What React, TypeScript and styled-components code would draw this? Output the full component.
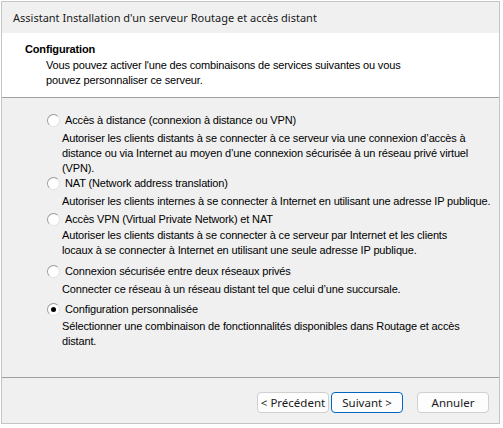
import React from 'react'
import styled, { createGlobalStyle } from 'styled-components'

const GlobalStyle = createGlobalStyle`
  html, body {
    margin: 0;
    padding: 0;
    background: #ffffff;
  }
  body {
    font-family: "Liberation Sans", Arial, sans-serif;
    font-size: 11px;
    letter-spacing: -0.15px;
    color: #000;
  }
`

type Option = {
  label: string
  desc: string[]
  checked?: boolean
  top: number
  gap: number
}

const options: Option[] = [
  {
    label: 'Accès à distance (connexion à distance ou VPN)',
    desc: [
      'Autoriser les clients distants à se connecter à ce serveur via une connexion d’accès à',
      'distance ou via Internet au moyen d’une connexion sécurisée à un réseau privé virtuel',
      '(VPN).',
    ],
    top: 0,
    gap: 3,
  },
  {
    label: 'NAT (Network address translation)',
    desc: ['Autoriser les clients internes à se connecter à Internet en utilisant une adresse IP publique.'],
    top: 0,
    gap: 3,
  },
  {
    label: 'Accès VPN (Virtual Private Network) et NAT',
    desc: [
      'Autoriser les clients distants à se connecter à ce serveur par Internet et les clients',
      'locaux à se connecter à Internet en utilisant une seule adresse IP publique.',
    ],
    top: 3,
    gap: 1,
  },
  {
    label: 'Connexion sécurisée entre deux réseaux privés',
    desc: ['Connecter ce réseau à un réseau distant tel que celui d’une succursale.'],
    top: 6,
    gap: 3,
  },
  {
    label: 'Configuration personnalisée',
    desc: [
      'Sélectionner une combinaison de fonctionnalités disponibles dans Routage et accès',
      'distant.',
    ],
    checked: true,
    top: 5,
    gap: 2,
  },
]

export default function App() {
  return (
    <>
      <GlobalStyle />
      <Window>
        <TitleBar>Assistant Installation d'un serveur Routage et accès distant</TitleBar>
        <Header>
          <HeaderTitle>Configuration</HeaderTitle>
          <HeaderText>
            Vous pouvez activer l'une des combinaisons de services suivantes ou vous
            <br />
            pouvez personnaliser ce serveur.
          </HeaderText>
        </Header>
        <Body>
          {options.map((o) => (
            <OptionBlock key={o.label} $top={o.top}>
              <OptionRow>
                <Radio $checked={!!o.checked} />
                <span>{o.label}</span>
              </OptionRow>
              <Desc $gap={o.gap}>
                {o.desc.map((line) => (
                  <div key={line}>{line}</div>
                ))}
              </Desc>
            </OptionBlock>
          ))}
        </Body>
        <Footer>
          <Button>&lt; Précédent</Button>
          <Button $primary>Suivant &gt;</Button>
          <Button $spaced>Annuler</Button>
        </Footer>
      </Window>
    </>
  )
}

const Window = styled.div`
  box-sizing: border-box;
  margin: 1px 0 0 1px;
  width: 499px;
  height: 423px;
  border: 1px solid #c4c4c4;
  background: #f0f0f0;
  display: flex;
  flex-direction: column;
`

const TitleBar = styled.div`
  height: 31px;
  flex-shrink: 0;
  display: flex;
  align-items: center;
  padding-left: 11px;
  font-family: "Noto Sans", "Open Sans", sans-serif;
  font-size: 11px;
  letter-spacing: 0;
  color: #1a1a1a;
  background: #f0f0f0;
`

const Header = styled.div`
  box-sizing: border-box;
  flex-shrink: 0;
  height: 65px;
  background: #ffffff;
  border-bottom: 1px solid #a0a0a0;
  padding: 9px 0 0 23px;
  line-height: 15px;
`

const HeaderTitle = styled.div`
  font-weight: bold;
`

const HeaderText = styled.div`
  margin: 1px 0 0 21px;
`

const Body = styled.div`
  flex: 1;
  padding-top: 15px;
  border-bottom: 1px solid #a0a0a0;
  line-height: 15px;
  white-space: nowrap;
`

const OptionBlock = styled.div<{ $top: number }>`
  margin-top: ${(p) => p.$top}px;
`

const OptionRow = styled.div`
  display: flex;
  align-items: center;
  padding-left: 45px;
  gap: 5px;
  height: 15px;
`

const Radio = styled.span<{ $checked: boolean }>`
  box-sizing: border-box;
  width: 13px;
  height: 13px;
  border-radius: 50%;
  border: 1px solid #9c9c9c;
  border-right-color: #e2e2e2;
  border-bottom-color: #e2e2e2;
  background: #ffffff;
  display: flex;
  align-items: center;
  justify-content: center;
  &::after {
    content: '';
    width: 5px;
    height: 5px;
    border-radius: 50%;
    background: #000;
    display: ${(p) => (p.$checked ? 'block' : 'none')};
  }
`

const Desc = styled.div<{ $gap: number }>`
  margin-top: ${(p) => p.$gap}px;
  padding-left: 60px;
`

const Footer = styled.div`
  height: 45px;
  flex-shrink: 0;
  display: flex;
  justify-content: flex-end;
  align-items: flex-start;
  padding: 14px 10px 0 0;
  box-sizing: border-box;
  gap: 2px;
`

const Button = styled.button<{ $primary?: boolean; $spaced?: boolean }>`
  box-sizing: border-box;
  width: 72px;
  height: 21px;
  margin-left: ${(p) => (p.$spaced ? '12px' : '0')};
  padding: 0;
  border: 1px solid ${(p) => (p.$primary ? '#0067c0' : '#d0d0d0')};
  border-radius: 4px;
  background: #fdfdfd;
  font-family: "Noto Sans", "Open Sans", sans-serif;
  font-size: 11.5px;
  letter-spacing: 0;
  color: #1a1a1a;
  display: flex;
  align-items: center;
  justify-content: center;
`
